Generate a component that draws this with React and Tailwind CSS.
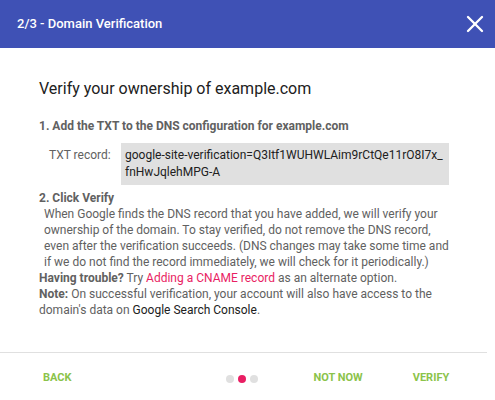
import { X } from 'lucide-react';

export default function App() {
  return (
    <div className="w-[495px] h-[400px] bg-white flex flex-col overflow-hidden font-['Roboto',_'Liberation_Sans',_sans-serif]">
      {/* Header */}
      <div className="h-12 bg-[#3f51b5] flex items-center justify-between pl-[17px] pr-[4px] shrink-0">
        <h2 className="text-white text-[13px] font-medium">2/3 - Domain Verification</h2>
        <button type="button" className="w-8 h-8 flex items-center justify-center text-white">
          <X size={28} strokeWidth={2} />
        </button>
      </div>

      {/* Body */}
      <div className="flex-1 pl-[39px] pr-[45px] pt-[29px]">
        <h3 className="text-[16px] text-[#212121] leading-6">Verify your ownership of example.com</h3>

        <p className="mt-[17px] text-[12px] font-bold text-[#616161] leading-4">
          1. Add the TXT to the DNS configuration for example.com
        </p>
        <div className="flex items-start mt-[9px]">
          <span className="w-[82px] shrink-0 pl-[10px] pt-[4px] text-[12px] text-[#616161] leading-[17px]">TXT record:</span>
          <div className="w-[328px] shrink-0 bg-[#e0e0e0] px-[4px] py-[4px] text-[12px] text-[#212121] leading-[17px] whitespace-nowrap">
            google-site-verification=Q3Itf1WUHWLAim9rCtQe11rO8I7x_<br />fnHwJqlehMPG-A
          </div>
        </div>

        <p className="mt-[5px] text-[12px] font-bold text-[#616161] leading-4">2. Click Verify</p>
        <p className="pl-[5px] text-[12px] text-[#616161] leading-4">
          When Google finds the DNS record that you have added, we will verify your ownership of the domain. To stay verified, do not remove the DNS record, even after the verification succeeds. (DNS changes may take some time and if we do not find the record immediately, we will check for it periodically.)
        </p>
        <p className="text-[12px] text-[#616161] leading-4">
          <span className="font-bold">Having trouble?</span> Try{' '}
          <a href="#" className="text-[#e91e63]">Adding a CNAME record</a> as an alternate option.
        </p>
        <p className="text-[12px] text-[#616161] leading-4">
          <span className="font-bold">Note:</span> On successful verification, your account will also have access to the domain's data on{' '}
          <span className="text-[#212121]">Google Search Console</span>.
        </p>
      </div>

      {/* Footer */}
      <div className="h-[48px] w-[487px] border-t border-[#e0e0e0] flex items-center pt-[4px] shrink-0">
        <button type="button" className="ml-[43px] text-[11px] font-bold text-[#8bc34a]">BACK</button>
        <div className="ml-[154px] flex items-center gap-[4px]">
          <span className="w-2 h-2 rounded-full bg-[#e0e0e0]" />
          <span className="w-2 h-2 rounded-full bg-[#e91e63]" />
          <span className="w-2 h-2 rounded-full bg-[#e0e0e0]" />
        </div>
        <button type="button" className="ml-[56px] text-[11px] font-bold text-[#8bc34a]">NOT NOW</button>
        <button type="button" className="ml-[50px] text-[11px] font-bold text-[#8bc34a]">VERIFY</button>
      </div>
    </div>
  );
}
